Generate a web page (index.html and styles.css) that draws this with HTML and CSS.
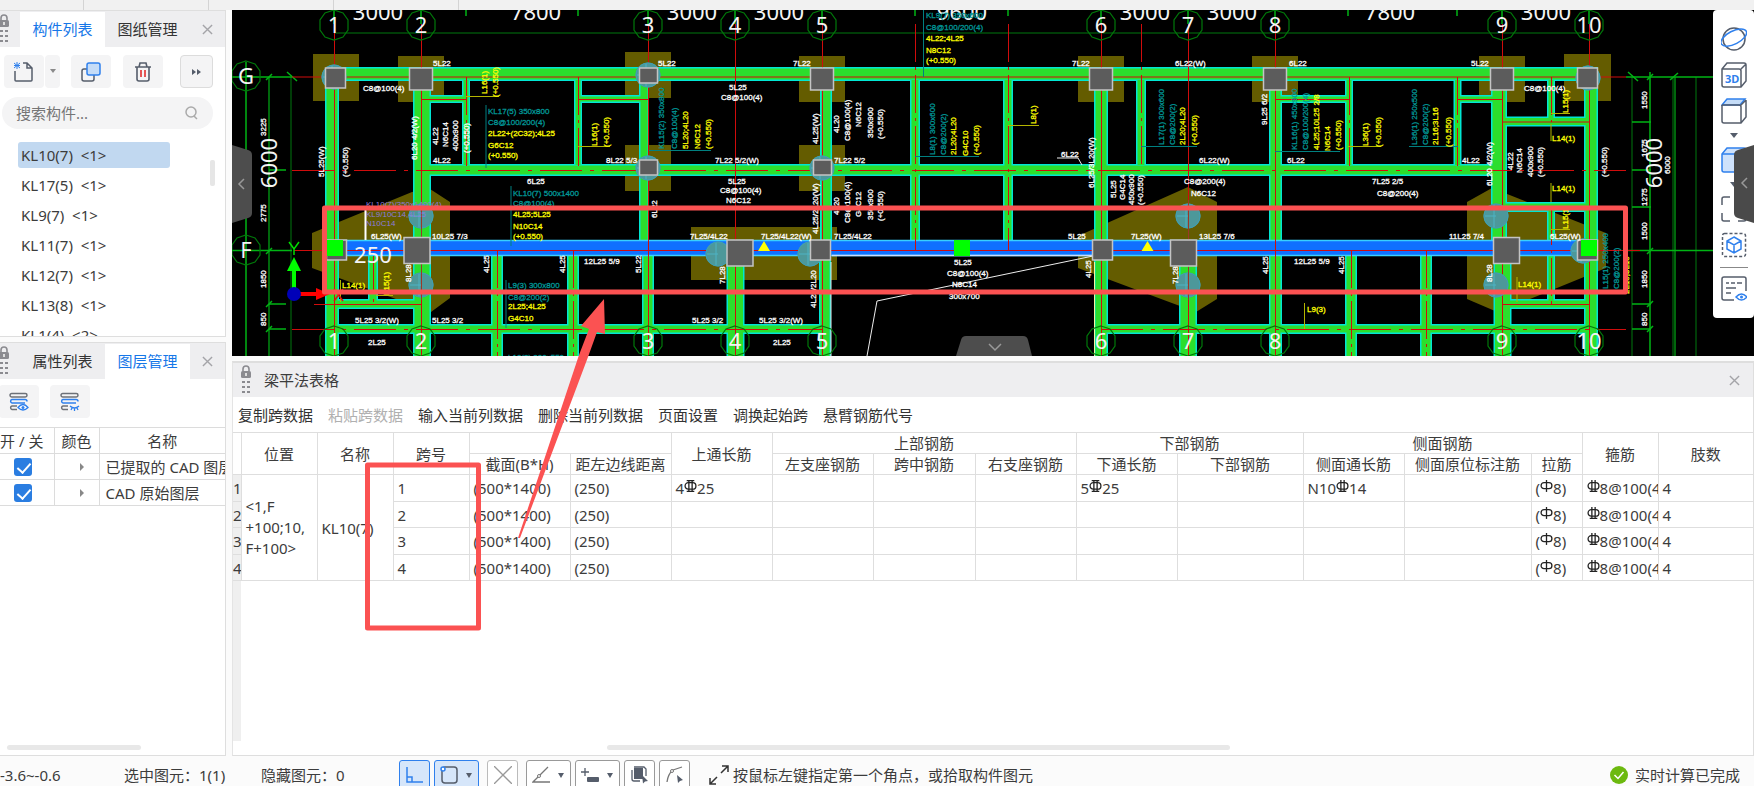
FILE: index.html
```html
<!DOCTYPE html>
<html lang="zh-CN">
<head>
<meta charset="utf-8">
<title>梁平法表格</title>
<link rel="stylesheet" href="styles.css">
</head>
<body>
<svg class="defs" aria-hidden="true">
  <symbol id="i-lock" viewBox="0 0 12 30"><path d="M3 6V4a3 3 0 0 1 6 0v2" fill="none" stroke="#8b8b90" stroke-width="1.6"/><rect x="1" y="6" width="10" height="7" rx="1.5" fill="#8b8b90"/><rect x="5" y="8" width="2" height="3" fill="#ddd"/><path d="M2 16h3v2H2zM7 16h3v2H7zM2 21h3v2H2zM7 21h3v2H7zM2 26h3v2H2zM7 26h3v2H7z" fill="#8b8b90"/></symbol>
  <symbol id="i-close" viewBox="0 0 12 12"><path d="M1 1l10 10M11 1L1 11" fill="none" stroke="#a4a4a8" stroke-width="1.5"/></symbol>
  <symbol id="i-layers" viewBox="0 0 20 20"><g fill="none" stroke-width="1.5"><rect x="1" y="1.500" width="17" height="3.500" rx="1.700" stroke="#6d7178"/><path d="M16 11H3a1.800 1.800 0 0 1 0-3.500h13a2 2 0 0 1 2 2" stroke="#2f80ed"/><path d="M8 17.500H3A1.800 1.800 0 0 1 3 14h5" stroke="#6d7178"/></g></symbol>
  <symbol id="r-3" viewBox="0 0 12 12"><g fill="none" stroke="#222" stroke-width="1.200"><rect x="1" y="2.500" width="10" height="6" rx="3"/><path d="M4.500 1v9M7.500 1v9M2.500 .600h7M2.500 10.500h7"/></g></symbol>
  <symbol id="r-2" viewBox="0 0 12 12"><g fill="none" stroke="#222" stroke-width="1.200"><rect x="1" y="2.500" width="10" height="6" rx="3"/><path d="M4.500 0v10M7.500 0v10M2.500 10.500h7"/></g></symbol>
  <symbol id="r-1" viewBox="0 0 12 12"><g fill="none" stroke="#222" stroke-width="1.200"><rect x="1" y="2.500" width="10" height="5.500" rx="2.700"/><path d="M6 0v11"/></g></symbol>
</svg>

<div class="ribbon-edge"><i></i><i></i><i></i><i></i></div>

<main class="workspace">
  <aside class="sidebar">
    <section class="panel components">
      <header class="tabs">
        <svg class="grip"><use href="#i-lock"/></svg>
        <button class="tab active">构件列表</button><button class="tab">图纸管理</button>
        <button class="close" aria-label="关闭"><svg><use href="#i-close"/></svg></button>
      </header>
      <div class="tools">
        <button class="tool" aria-label="新建"><svg viewBox="0 0 20 20"><path d="M1 9v9a1 1 0 0 0 1 1h15a1 1 0 0 0 1-1V6l-5-5h-4M13 1v5h5" fill="none" stroke="#555d6b" stroke-width="1.500"/><path d="M0 1l6 5M6 1L0 6M3 0v7M0 3.500h6" stroke="#2f80ed"/></svg></button>
        <button class="tool drop" aria-label="新建选项"><svg viewBox="0 0 8 5"><path d="M1 0h6L4 4z" fill="#8a8a8a"/></svg></button>
        <button class="tool second" aria-label="复制"><svg viewBox="0 0 20 20"><rect x="1" y="7" width="12" height="12" rx="2" fill="none" stroke="#555d6b" stroke-width="1.500"/><rect x="6" y="1" width="13" height="12" rx="2" fill="#c5dcf7" stroke="#2f80ed" stroke-width="1.500"/></svg></button>
        <button class="tool third" aria-label="删除"><svg viewBox="0 0 20 20"><path d="M2 5h16M6 5l1-4h6l1 4M4 5v12a2 2 0 0 0 2 2h8a2 2 0 0 0 2-2V5" fill="none" stroke="#555d6b" stroke-width="1.600"/><path d="M8 8v7M12 8v7" stroke="#e02020" stroke-width="1.500"/></svg></button>
        <button class="tool more" aria-label="更多"><svg viewBox="0 0 10 8"><path d="M0 1l4 3-4 3zM5 1l4 3-4 3z" fill="#555d6b"/></svg></button>
      </div>
      <label class="search"><input type="text" placeholder="搜索构件..." aria-label="搜索构件"><svg viewBox="0 0 14 14"><circle cx="6" cy="6" r="5" fill="none" stroke="#aaa" stroke-width="1.500"/><path d="M9 10l3 3" stroke="#aaa" stroke-width="1.500"/></svg></label>
      <div class="list-box">
        <ul class="list">
          <li class="selected">KL10(7) &nbsp;&lt;1&gt;</li><li>KL17(5) &nbsp;&lt;1&gt;</li><li>KL9(7) &nbsp;&lt;1&gt;</li><li>KL11(7) &nbsp;&lt;1&gt;</li><li>KL12(7) &nbsp;&lt;1&gt;</li><li>KL13(8) &nbsp;&lt;1&gt;</li><li>KL1(4) &nbsp;&lt;2&gt;</li>
        </ul>
        <span class="vthumb"></span>
      </div>
    </section>

    <section class="panel layers">
      <header class="tabs">
        <svg class="grip"><use href="#i-lock"/></svg>
        <button class="tab">属性列表</button><button class="tab active">图层管理</button>
        <button class="close" aria-label="关闭"><svg><use href="#i-close"/></svg></button>
      </header>
      <div class="layer-tools">
        <button class="tool" aria-label="显示图层"><svg viewBox="0 0 20 20"><use href="#i-layers" width="20" height="20"/><path d="M9 15.500q5-6 10 0q-5 5-10 0z" fill="#fff" stroke="#2f80ed" stroke-width="1.300"/><circle cx="14" cy="15.500" r="1.500" fill="#2f80ed"/></svg></button>
        <button class="tool" aria-label="隐藏图层"><svg viewBox="0 0 20 20"><use href="#i-layers" width="20" height="20"/><path d="M10 14q4.500 4 9 0M11 18l1-2M14.500 19v-3M18 18l-1-2" fill="none" stroke="#2f80ed" stroke-width="1.300"/></svg></button>
      </div>
      <table class="layer-table">
        <colgroup><col class="l1"><col class="l2"><col class="l3"></colgroup>
        <thead><tr><th class="switch">开 / 关</th><th>颜色</th><th class="lname">名称</th></tr></thead>
        <tbody>
          <tr><td><input type="checkbox" checked aria-label="已提取的 CAD 图层"></td><td><svg class="expand" viewBox="0 0 6 8"><path d="M1 0l4 4-4 4z" fill="#888"/></svg></td><td>已提取的 CAD 图层</td></tr>
          <tr><td><input type="checkbox" checked aria-label="CAD 原始图层"></td><td><svg class="expand" viewBox="0 0 6 8"><path d="M1 0l4 4-4 4z" fill="#888"/></svg></td><td>CAD 原始图层</td></tr>
        </tbody>
      </table>
      <span class="hthumb"></span>
    </section>
  </aside>

  <div class="content">
    <section class="canvas">
      <svg class="drawing" viewBox="232 10 1522 346" role="img" aria-label="梁平面图">
        <defs>
          <polygon id="ring" points="0,-15 9,-12 14,-5 14,5 9,12 0,15 -9,12 -14,5 -14,-5 -9,-12" fill="none" stroke="#00780a" stroke-width="1.200"/>
          <g id="pile"><circle r="12.500" fill="#4d989a"/><path d="M-11 0H0M-2-12V12" stroke="#4fb3c4"/><circle r="12" fill="none" stroke="#3fa0b4"/></g>
          <g id="frame">
            <path stroke-width="14" d="M334 74H1591M332 74V356M1591 67V356M1101 80V356"/>
            <path stroke-width="18" d="M422 74V356M735.500 256V356M1188 256V356M1502.500 256V356"/>
            <path stroke-width="16" d="M1499 80V256"/>
            <path stroke-width="10" d="M644 74V250M915 81V240M1008 81V240M1141 81V165M373 256V304M426 329H822M334 329H426M1101 329H1590M334 304H420M1505 304H1590M1505 121.500H1590M1505 207H1590"/>
            <path stroke-width="12" d="M648 256V356M826 80V250M825 256V356M422 170H1495M497 256V329M573 256V329M1351 256V329M1426 256V329M497 329V356M573 329V356M1351 329V356M1426 329V356"/>
            <path stroke-width="13" d="M1275.500 80V356"/>
            <path stroke-width="8" d="M466 81V165M578 81V165M1349 81V165M1457.500 81V165M1551 81V120M1551 207V304M425 99H466M578 99H645M1275 99H1349M1457 99H1495"/>
          </g>
        </defs>
        <rect x="232" y="10" width="1522" height="346" fill="#000"/>
        <g fill="#645c00">
          <path d="M313 54h46v47h-46zM398 56h46v46h-46zM625 52h46v46h-46zM625 145h46v46h-46zM799 56h46v46h-46zM799 145h46v46h-46zM691 227h146v53H691zM1078 56h46v46h-46zM1252 56h46v46h-46zM1479 56h46v46h-46zM1564 54h47v47h-47z"/>
          <path d="M312 233L412 192L430 189L450 202V298L431 312L312 268zM1078 236L1188 187L1217 202V299L1196 312L1078 268zM1467 202L1492 188L1606 233V268L1530 299L1502 314L1467 299z"/>
        </g>
        <!-- beams: edges first, then bodies -->
        <g stroke="#00e6d4" fill="none"><use href="#frame"/></g>
        <g stroke="#2cde2c" fill="none">
          <path stroke-width="11" d="M334 74H1590M332 74V356M1591 69V356M1101 80V356"/>
          <path stroke-width="15" d="M422 74V356M735.500 256V356M1188 256V356M1502.500 256V356"/>
          <path stroke-width="13" d="M1499 80V256"/>
          <path stroke-width="7" d="M644 74V250M915 80V240M1008 80V240M1141 80V165M373 256V304M334 329H822M1101 329H1590M334 304H420M1505 304H1590M1505 121.500H1590M1505 207H1590"/>
          <path stroke-width="9" d="M648 256V356M826 80V250M825 256V356M422 170H1495M497 256V356M573 256V356M1351 256V356M1426 256V356"/>
          <path stroke-width="10" d="M1275.500 80V356"/>
          <path stroke-width="5" d="M466 80V165M578 80V165M1349 80V165M1457.500 80V165M1551 80V120M1551 207V304M425 99H466M578 99H645M1275 99H1349M1457 99H1495"/>
        </g>
        <path d="M831 262V356" stroke="#eee"/><path d="M1094.500 262V356" stroke="#f4f4a0"/>
        <rect x="334" y="240" width="1255" height="16" fill="#1070ff"/>
        <path d="M334 240.500H1589M334 255.500H1589" stroke="#38d0ff" stroke-width="1.500"/><path d="M832 255.500H1092" stroke="#c8dcff" stroke-width="1.500"/>
        <!-- grid axes -->
        <g fill="none" stroke="#00500a" stroke-width="1.500">
          <path d="M334 33H1589M291 77V356M1632 77V356M1673 77V356M1696 77V356"/>
          <path stroke="#008a10" d="M269 77V356M1675 77V356"/>
          <path stroke="#00b414" d="M246 62V356M232 77H292M232 250.500H292M269 304H286M269 329H286M269 170H286M1632 122H1651M1632 170H1651M1632 207H1651M1632 304H1651M1632 329H1651M1650 72V356M1626 77H1713M1626 250.500H1713M466 10V16M578 10V16M915 10V16M1008 10V16M1348 10V16M1457 10V16M334 10V24M421 10V24M648 10V24M735 10V24M822 10V24M1101 10V24M1188 10V24M1275 10V24M1502 10V24M1589 10V24"/>
          <path stroke="#00b414" d="M287 72l10 9M266 80l6-6M1628 72l10 9M1647 80l6-6M1670 80l8-7M266 254l6-6M266 307l6-6M266 332l6-6M1647 254l6-6M1647 307l6-6M1647 332l6-6"/>
        </g>
        <g fill="none" stroke="#d00c0c" stroke-width="1">
          <path d="M292 77H1626M334 250.500H1640M294 250.500H334"/>
          <path d="M334.500 24V356M421.500 24V356M648.500 24V356M735.500 24V356M822.500 24V356M1101.500 24V356M1188.500 24V356M1275.500 24V356M1502.500 24V356M1589.500 24V356"/>
          <path d="M915.500 24V250M1008.500 24V250M1141.500 24V165" stroke-dasharray="38 5 3 5"/>
          <path d="M292 170.500H1626M292 329.500H822M1101 329.500H1626" stroke-dasharray="42 8 4 8"/>
          <path d="M466.500 77V170M578.500 77V170M497.500 250V356M573.500 250V356M1349.500 77V170M1457.500 77V170M1351.500 250V356M1426.500 250V356M1551.500 77V122M1551.500 207V304M373.500 256V304" stroke-dasharray="38 5 3 5"/>
          <path d="M314 304.500H421M1502 304.500H1589M421 99.500H466M578 99.500H648M1275 99.500H1349M1457 99.500H1502M1502 122H1589"/>
        </g>
        <!-- annotation leaders -->
        <path fill="none" stroke="#008080" d="M486 105V168M511 186V246M506 280V328M923.500 10V77M649 150.500H711M915 156.500H979M1141 146.500H1197M1275 151.500H1340M1409 146.500H1458"/>
        <path fill="none" stroke="#b4b400" d="M466 96.500H499M578 146.500H610M1008 125.500H1039M1348 146.500H1381M1304.500 303V329M1551 124V141M1551 183V202M1517 277V302M340.500 280V302M1551 113.500H1570M1551 229.500H1570M376 295.500H393"/>
        <path fill="none" stroke="#eee" d="M867 356L877 301L1093 256M1057 158H1078L1082 165"/><path d="M365.500 209V240" stroke="#fff" stroke-width="2"/>
        <!-- piles and columns -->
        <use href="#pile" x="334" y="77"/><use href="#pile" x="648" y="75"/><use href="#pile" x="648" y="168"/><use href="#pile" x="822" y="168"/><use href="#pile" x="421" y="216"/><use href="#pile" x="421" y="285"/><use href="#pile" x="718" y="254"/><use href="#pile" x="810" y="254"/><use href="#pile" x="1188" y="216"/><use href="#pile" x="1188" y="285"/><use href="#pile" x="1496" y="216"/><use href="#pile" x="1496" y="285"/><use href="#pile" x="1588" y="78"/><use href="#pile" x="1583" y="251"/>
        <path stroke="#9a3828" d="M421.500 200V300M1188.500 200V300"/>
        <path fill="#5c5c5c" stroke="#c4c4c4" stroke-width="1.500" d="M325.500 68h20v20h-20zM409.500 68h23v22h-23zM639.500 68h18v15h-18zM639.500 160h18v15h-18zM810.500 68h23v22h-23zM813.500 160h18v15h-18zM1089.500 68h23v22h-23zM1263.500 68h23v22h-23zM1490.500 68h23v22h-23zM1577.500 68h20v20h-20zM326.500 240h20v20h-20zM404 237.500h26v26h-26zM727 240h26v26h-26zM810.500 240h20v20h-20zM1092.500 240h20v20h-20zM1170.500 240h26v26h-26zM1493.500 237.500h26v26h-26zM1577.500 240h20v20h-20z"/>
        <path fill="#0f0" d="M327 240h16v16h-16zM954 240h16v16h-16zM1581 240h16v16h-16z"/>
        <path fill="#ff0" d="M764 241l6 10h-12zM1147.500 241l6 10h-12z"/>
        <!-- axis bubbles -->
        <use href="#ring" x="334" y="25"/><use href="#ring" x="421" y="25"/><use href="#ring" x="648" y="25"/><use href="#ring" x="735" y="25"/><use href="#ring" x="822" y="25"/><use href="#ring" x="1101" y="25"/><use href="#ring" x="1188" y="25"/><use href="#ring" x="1275" y="25"/><use href="#ring" x="1502" y="25"/><use href="#ring" x="1589" y="25"/>
        <use href="#ring" x="334" y="341"/><use href="#ring" x="421" y="341"/><use href="#ring" x="648" y="341"/><use href="#ring" x="735" y="341"/><use href="#ring" x="822" y="341"/><use href="#ring" x="1101" y="341"/><use href="#ring" x="1188" y="341"/><use href="#ring" x="1275" y="341"/><use href="#ring" x="1502" y="341"/><use href="#ring" x="1589" y="341"/>
        <use href="#ring" x="246" y="76"/><use href="#ring" x="246" y="250"/>
        <g class="axis">
          <text x="334" y="33">1</text><text x="421" y="33">2</text><text x="648" y="33">3</text><text x="735" y="33">4</text><text x="822" y="33">5</text><text x="1101" y="33">6</text><text x="1188" y="33">7</text><text x="1275" y="33">8</text><text x="1502" y="33">9</text><text x="1589" y="33">10</text>
          <text x="334" y="349">1</text><text x="421" y="349">2</text><text x="648" y="349">3</text><text x="735" y="349">4</text><text x="822" y="349">5</text><text x="1101" y="349">6</text><text x="1188" y="349">7</text><text x="1275" y="349">8</text><text x="1502" y="349">9</text><text x="1589" y="349">10</text>
          <text x="246" y="84">G</text><text x="246" y="258">F</text>
          <text x="378" y="20">3000</text><text x="536" y="20">7800</text><text x="692" y="20">3000</text><text x="779" y="20">3000</text><text x="962" y="20">9600</text><text x="1145" y="20">3000</text><text x="1232" y="20">3000</text><text x="1390" y="20">7800</text><text x="1546" y="20">3000</text>
          <text x="373" y="263">250</text>
          <g transform="rotate(-90)"><text x="-163" y="277">6000</text><text x="-163" y="1662">6000</text></g>
        </g>
        <!-- origin triad -->
        <path d="M294 290V268" stroke="#0f0" stroke-width="4"/><path d="M294 257l7 14h-14z" fill="#0f0"/><path d="M289 242l5 7 5-7M294 249v6" stroke="#0d0" stroke-width="1.500" fill="none"/>
        <path d="M300 294H318" stroke="#f00" stroke-width="4"/><path d="M330 294l-14-6v12z" fill="#f00"/><path d="M334 289l9 12M343 289l-9 12" stroke="#e01010" stroke-width="1.500"/><circle cx="294" cy="294" r="7" fill="#0000b8"/>
        <!-- reinforcement marks -->
        <g class="mark">
          <text x="433" y="66">5L22</text><text x="363" y="91">C8@100(4)</text><text x="433" y="163">4L22</text><text x="606" y="163">8L22 5/3</text><text x="527" y="184">6L25</text><text x="371" y="239">6L25(W)</text><text x="432" y="239">10L25 7/3</text><text x="584" y="264">12L25 5/9</text><text x="355" y="323">5L25 3/2(W)</text><text x="432" y="323">5L25 3/2</text><text x="368" y="345">2L25</text>
          <text x="658" y="66">5L22</text><text x="793" y="66">7L22</text><text x="729" y="90">5L25</text><text x="721" y="100">C8@100(4)</text><text x="715" y="163">7L22 5/2(W)</text><text x="834" y="163">7L22 5/2</text><text x="728" y="184">5L25</text><text x="720" y="193">C8@100(4)</text><text x="726" y="203">N6C12</text><text x="690" y="239">7L25/4L22</text><text x="761" y="239">7L25/4L22(W)</text><text x="834" y="239">7L25/4L22</text><text x="1068" y="239">5L25</text><text x="1061" y="157">6L22</text><text x="954" y="265">5L25</text><text x="947" y="276">C8@100(4)</text><text x="952" y="287">N8C14</text><text x="949" y="299">300x700</text><text x="692" y="323">5L25 3/2</text><text x="759" y="323">5L25 3/2(W)</text><text x="773" y="345">2L25</text><text x="1072" y="66">7L22</text>
          <text x="1175" y="66">6L22(W)</text><text x="1289" y="66">6L22</text><text x="1471" y="66">5L22</text><text x="1199" y="163">6L22(W)</text><text x="1287" y="163">6L22</text><text x="1462" y="163">4L22</text><text x="1184" y="184">C8@200(4)</text><text x="1191" y="196">N6C12</text><text x="1372" y="184">7L25 2/5</text><text x="1377" y="196">C8@200(4)</text><text x="1131" y="239">7L25(W)</text><text x="1199" y="239">13L25 7/6</text><text x="1449" y="239">11L25 7/4</text><text x="1294" y="264">12L25 5/9</text><text x="1524" y="91">C8@100(4)</text><text x="1550" y="239">6L25(W)</text>
        </g>
        <g class="mark yellow">
          <text x="488" y="136">2L22+(2C32);4L25</text><text x="488" y="148">G6C12</text><text x="488" y="158">(+0.550)</text><text x="513" y="217">4L25;5L25</text><text x="513" y="229">N10C14</text><text x="513" y="239">(+0.550)</text><text x="508" y="309">2L25;4L25</text><text x="508" y="321">G4C10</text><text x="342" y="288">L14(1)</text><text x="926" y="41">4L22;4L25</text><text x="926" y="53">N8C12</text><text x="926" y="63">(+0.550)</text><text x="1307" y="312">L9(3)</text><text x="1552" y="141">L14(1)</text><text x="1552" y="191">L14(1)</text><text x="1518" y="287">L14(1)</text>
        </g>
        <g class="mark teal">
          <text x="488" y="114">KL17(5) 350x800</text><text x="488" y="125">C8@100/200(4)</text><text x="513" y="196">KL10(7) 500x1400</text><text x="513" y="206">C8@100(4)</text><text x="508" y="288">L9(3) 300x800</text><text x="508" y="300">C8@200(2)</text><text x="508" y="360">L10(2) 300x550</text><text x="926" y="18">KL9(7) 350x600</text><text x="926" y="30">C8@100/200(4)</text>
        </g>
        <g class="mark violet"><text x="366" y="207">KL10(7)/350x1400(4)</text><text x="366" y="217">KL9/10C14,4L25</text><text x="366" y="226">N10C14</text></g>
        <g class="mark" transform="rotate(-90)">
          <text x="-136" y="266">3225</text><text x="-222" y="266">2775</text><text x="-288" y="266">1850</text><text x="-326" y="266">850</text>
          <text x="-177" y="324">5L25(W)</text><text x="-177" y="348">(+0.550)</text><text x="-160" y="417">6L20 4/2(W)</text><text x="-145" y="438">4L22</text><text x="-147" y="448">N6C14</text><text x="-151" y="458">400x900</text><text x="-153" y="469">(+0.550)</text><text x="-218" y="657">6L22</text><text x="-273" y="489">4L25</text><text x="-273" y="565">4L25</text><text x="-273" y="641">5L22</text><text x="-282" y="411">8L28</text>
          <text x="-144" y="818">4L25(W)</text><text x="-133" y="839">4L20</text><text x="-141" y="850">C8@100(4)</text><text x="-127" y="861">N6C12</text><text x="-138" y="873">350x900</text><text x="-139" y="883">(+0.550)</text><text x="-234" y="818">4L25/2L20(W)</text><text x="-215" y="839">4L20</text><text x="-223" y="850">C8@100(4)</text><text x="-217" y="861">G4C12</text><text x="-220" y="873">350x900</text><text x="-221" y="883">(+0.550)</text><text x="-284" y="725">7L28</text><text x="-308" y="816">4L25/2L20</text><text x="-188" y="1094">6L25/3L20(W)</text><text x="-278" y="1091">4L25</text>
          <text x="-198" y="1116">5L25</text><text x="-200" y="1125">G4C14</text><text x="-205" y="1134">450x900</text><text x="-205" y="1143">(+0.550)</text><text x="-125" y="1267">9L25 6/2</text><text x="-186" y="1492">6L20 4/2(W)</text><text x="-274" y="1268">4L25</text><text x="-274" y="1344">4L25</text><text x="-284" y="1178">7L28</text><text x="-282" y="1492">8L28</text>
          <text x="-170" y="1513">4L22</text><text x="-173" y="1522">N6C14</text><text x="-177" y="1533">400x900</text><text x="-177" y="1543">(+0.550)</text><text x="-177" y="1607">(+0.550)</text>
          <text x="-109" y="1647">1550</text><text x="-157" y="1647">1675</text><text x="-206" y="1647">1275</text><text x="-240" y="1647">1500</text><text x="-288" y="1647">1850</text><text x="-326" y="1647">850</text><text x="-174" y="1670">6000</text>
        </g>
        <g class="mark yellow" transform="rotate(-90)">
          <text x="-94" y="487">L16(1)</text><text x="-97" y="498">(+0.550)</text><text x="-146" y="597">L16(1)</text><text x="-147" y="609">(+0.550)</text><text x="-149" y="688">5L20;4L20</text><text x="-149" y="700">N6C12</text><text x="-149" y="711">(+0.550)</text><text x="-295" y="389">L15(1)</text><text x="-155" y="956">2L20;4L20</text><text x="-156" y="968">G4C10</text><text x="-155" y="979">(+0.550)</text><text x="-124" y="1036">L8(1)</text><text x="-145" y="1185">2L20;4L20</text><text x="-145" y="1197">(+0.550)</text><text x="-150" y="1319">4L25;10L25 2/8</text><text x="-151" y="1330">N6C14</text><text x="-150" y="1341">(+0.550)</text><text x="-146" y="1368">L36(1)</text><text x="-147" y="1381">(+0.550)</text><text x="-145" y="1438">2L16;3L16</text><text x="-147" y="1451">(+0.550)</text><text x="-113" y="1568">L15(1)</text><text x="-229" y="1568">L15(1)</text><text x="-294" y="1629">2L16;3L16</text>
        </g>
        <g class="mark teal" transform="rotate(-90)">
          <text x="-149" y="664">KL15(2) 350x800</text><text x="-149" y="677">C8@100(4)</text><text x="-155" y="935">L8(1) 300x600</text><text x="-155" y="946">C8@200(2)</text><text x="-145" y="1164">L17(1) 300x600</text><text x="-145" y="1175">C8@200(2)</text><text x="-150" y="1297">KL16(1) 450x900</text><text x="-150" y="1308">C8@100/200(4)</text><text x="-145" y="1417">L36(1) 250x500</text><text x="-145" y="1428">C8@200(2)</text><text x="-289" y="1608">L15(1) 250x400</text><text x="-289" y="1619">C8@200(2)</text>
        </g>
      </svg>
      <button class="fold left" aria-label="收起左侧"><svg viewBox="0 0 20 78"><path d="M0 0l16 5q4 1 4 5v58q0 4-4 5L0 78z" fill="#4d4d4d"/><path d="M12 34l-5 5 5 5" fill="none" stroke="#999" stroke-width="1.500"/></svg></button>
      <button class="fold bottom" aria-label="收起底部"><svg viewBox="0 0 76 20"><path d="M0 20L5 4q1-4 5-4h57q4 0 5 4l4 16z" fill="#4d4d4d"/><path d="M33 8l6 6 6-6" fill="none" stroke="#999" stroke-width="1.500"/></svg></button>
      <nav class="view-tools" aria-label="视图">
        <button aria-label="动态观察"><svg viewBox="0 0 26 26"><circle cx="13" cy="13" r="11" fill="none" stroke="#555d6b" stroke-width="1.500"/><ellipse cx="13" cy="11.500" rx="14" ry="6.500" transform="rotate(-27 13 12)" fill="none" stroke="#2f80ed" stroke-width="1.500"/></svg></button>
        <button aria-label="三维"><svg viewBox="0 0 26 26"><path d="M1 7l5-6h17a2 2 0 0 1 2 2v16l-5 6H3a2 2 0 0 1-2-2zM1 7h17a2 2 0 0 1 2 2v16M20 7l5-5" fill="none" stroke="#555d6b" stroke-width="1.500"/><text x="4" y="21" class="three-d">3D</text></svg></button>
        <button aria-label="俯视"><svg viewBox="0 0 26 26"><path d="M1 7l5-6h18l-5 6z" fill="#c5dcf7" stroke="#2f80ed" stroke-width="1.500"/><path d="M1 7v16a2 2 0 0 0 2 2h17l5-6V2M1 7h17a2 2 0 0 1 2 2v16M20 7l5-5" fill="none" stroke="#555d6b" stroke-width="1.500"/></svg></button>
        <svg class="caret" viewBox="0 0 8 5"><path d="M0 0h8L4 5z" fill="#555d6b"/></svg>
        <button aria-label="着色"><svg viewBox="0 0 26 26"><path d="M1 7l5-6h17a2 2 0 0 1 2 2v16l-5 6H3a2 2 0 0 1-2-2z" fill="#cfe2fb" stroke="#2f80ed" stroke-width="1.500"/><path d="M1 7h18v18" fill="none" stroke="#2f80ed" stroke-width="1.500"/></svg></button>
        <svg class="caret" viewBox="0 0 8 5"><path d="M0 0h8L4 5z" fill="#555d6b"/></svg>
        <button aria-label="全屏"><svg viewBox="0 0 26 26"><path d="M9 1H3a2 2 0 0 0-2 2v6M17 1h6a2 2 0 0 1 2 2v6M1 17v6a2 2 0 0 0 2 2h6M17 25h6a2 2 0 0 0 2-2v-6" fill="none" stroke="#555d6b" stroke-width="1.500"/></svg></button>
        <button aria-label="局部三维"><svg viewBox="0 0 26 26"><rect x="1.500" y="1.500" width="23" height="23" rx="2" fill="none" stroke="#555d6b" stroke-width="1.500" stroke-dasharray="3 2"/><path d="M13 5l7 4v8l-7 4-7-4V9zM6 9l7 4 7-4M13 13v8" fill="none" stroke="#2f80ed" stroke-width="1.500"/></svg></button>
        <hr>
        <button aria-label="显示设置"><svg viewBox="0 0 26 26"><path d="M13 24H3a2 2 0 0 1-2-2V3a2 2 0 0 1 2-2h20a2 2 0 0 1 2 2v12M5 7h3M10 7h4M16 7h5M5 12h10M5 17h5" fill="none" stroke="#555d6b" stroke-width="1.500"/><path d="M15 21q5.500-6 11 0q-5.500 6-11 0z" fill="#fff" stroke="#2f80ed" stroke-width="1.500"/><circle cx="20.500" cy="21" r="1.500" fill="#2f80ed"/></svg></button>
      </nav>
      <button class="fold right" aria-label="展开右侧"><svg viewBox="0 0 20 78"><path d="M20 0L4 5Q0 6 0 10v58q0 4 4 5l16 5z" fill="#4a4a4a"/><path d="M13 33l-5 5 5 5" fill="none" stroke="#999" stroke-width="1.500"/></svg></button>
    </section>

    <section class="panel beam">
      <header class="beam-title"><svg class="grip"><use href="#i-lock"/></svg><h2>梁平法表格</h2><button class="close" aria-label="关闭"><svg><use href="#i-close"/></svg></button></header>
      <div class="beam-actions"><button>复制跨数据</button><button disabled>粘贴跨数据</button><button>输入当前列数据</button><button>删除当前列数据</button><button>页面设置</button><button>调换起始跨</button><button>悬臂钢筋代号</button></div>
      <div class="sheet">
        <table class="beam-table">
          <colgroup><col class="c8"><col class="c76"><col class="c76"><col class="c76"><col class="c101"><col class="c101"><col class="c101"><col class="c101"><col class="c102"><col class="c101"><col class="c101"><col class="c126"><col class="c101"><col class="c127"><col class="c51"><col class="c76"><col></colgroup>
          <thead>
            <tr><th rowspan="2"></th><th rowspan="2">位置</th><th rowspan="2">名称</th><th rowspan="2">跨号</th><th colspan="2"></th><th rowspan="2">上通长筋</th><th colspan="3">上部钢筋</th><th colspan="2">下部钢筋</th><th colspan="3">侧面钢筋</th><th rowspan="2">箍筋</th><th rowspan="2">肢数</th></tr>
            <tr><th>截面(B*H)</th><th>距左边线距离</th><th>左支座钢筋</th><th>跨中钢筋</th><th>右支座钢筋</th><th>下通长筋</th><th>下部钢筋</th><th>侧面通长筋</th><th>侧面原位标注筋</th><th>拉筋</th></tr>
          </thead>
          <tbody>
            <tr><th class="num">1</th><td rowspan="4" class="place">&lt;1,F<br>+100;10,<br>F+100&gt;</td><td rowspan="4">KL10(7)</td><td>1</td><td>(500*1400)</td><td>(250)</td><td>4<svg class="bar"><use href="#r-3"/></svg>25</td><td></td><td></td><td></td><td>5<svg class="bar"><use href="#r-3"/></svg>25</td><td></td><td>N10<svg class="bar"><use href="#r-2"/></svg>14</td><td></td><td>(<svg class="bar"><use href="#r-1"/></svg>8)</td><td><svg class="bar"><use href="#r-2"/></svg>8@100(4)</td><td>4</td></tr>
            <tr><th class="num">2</th><td>2</td><td>(500*1400)</td><td>(250)</td><td></td><td></td><td></td><td></td><td></td><td></td><td></td><td></td><td>(<svg class="bar"><use href="#r-1"/></svg>8)</td><td><svg class="bar"><use href="#r-2"/></svg>8@100(4)</td><td>4</td></tr>
            <tr><th class="num">3</th><td>3</td><td>(500*1400)</td><td>(250)</td><td></td><td></td><td></td><td></td><td></td><td></td><td></td><td></td><td>(<svg class="bar"><use href="#r-1"/></svg>8)</td><td><svg class="bar"><use href="#r-2"/></svg>8@100(4)</td><td>4</td></tr>
            <tr><th class="num">4</th><td>4</td><td>(500*1400)</td><td>(250)</td><td></td><td></td><td></td><td></td><td></td><td></td><td></td><td></td><td>(<svg class="bar"><use href="#r-1"/></svg>8)</td><td><svg class="bar"><use href="#r-2"/></svg>8@100(4)</td><td>4</td></tr>
          </tbody>
        </table>
      </div>
      <span class="hthumb wide"></span>
    </section>
  </div>
</main>

<footer class="status">
  <span class="coord">-3.6~-0.6</span><span class="picked">选中图元：1(1)</span><span class="hidden-count">隐藏图元：0</span>
  <div class="modes">
    <button class="on" aria-label="正交"><svg viewBox="0 0 18 18"><path d="M1 1v15h16M1 11h5v5" fill="none" stroke="#2f80ed" stroke-width="1.500"/></svg></button>
    <button class="on pair" aria-label="对象捕捉"><svg viewBox="0 0 18 18"><rect x="2" y="1" width="15" height="16" rx="3" fill="none" stroke="#555d6b" stroke-width="1.500"/><circle cx="3" cy="3" r="2" fill="#fff" stroke="#2f80ed" stroke-width="1.500"/></svg><svg class="caret" viewBox="0 0 8 5"><path d="M1 0h6L4 5z" fill="#555d6b"/></svg></button>
    <button class="apart dim" aria-label="交点"><svg viewBox="0 0 18 18"><path d="M0 0l18 18M18 0L0 18" stroke="#999" stroke-width="1.300"/></svg></button>
    <button class="apart pair" aria-label="角度"><svg viewBox="0 0 18 18"><path d="M16 1L1 16h17" fill="none" stroke="#777" stroke-width="1.300"/><circle cx="7" cy="10" r="1.500" fill="#fff" stroke="#777"/></svg><svg class="caret" viewBox="0 0 8 5"><path d="M1 0h6L4 5z" fill="#555d6b"/></svg></button>
    <button class="pair" aria-label="偏移"><svg viewBox="0 0 18 18"><path d="M0 6h8M4 2v8" stroke="#555d6b" stroke-width="1.300"/><rect x="6" y="11" width="12" height="5" rx="1" fill="#555d6b"/></svg><svg class="caret" viewBox="0 0 8 5"><path d="M1 0h6L4 5z" fill="#555d6b"/></svg></button>
    <button aria-label="选择"><svg viewBox="0 0 18 18"><rect x="3" y="2" width="9" height="11" fill="#555d6b"/><path d="M1 4v9a2 2 0 0 0 2 2h6M3 1h10l2 2v7" fill="none" stroke="#555d6b" stroke-width="1.300"/><path d="M11 9l6 6-3 .500-2 2z" fill="#555d6b"/></svg></button>
    <button aria-label="折线"><svg viewBox="0 0 18 18"><path d="M1 16Q2 8 7 4l9-3" fill="none" stroke="#777" stroke-width="1.300"/><path d="M11 9l6 5-3 1-2 2z" fill="#555d6b"/><circle cx="6" cy="5" r="1.500" fill="#fff" stroke="#777"/></svg></button>
  </div>
  <span class="hint"><svg viewBox="0 0 20 20"><path d="M12 8l7-7M13 1h6v6M8 12l-7 7M1 13v6h6" fill="none" stroke="#333" stroke-width="1.500"/></svg>按鼠标左键指定第一个角点，或拾取构件图元</span>
  <span class="done"><svg viewBox="0 0 18 18"><circle cx="9" cy="9" r="9" fill="#6cb90f"/><path d="M4.500 9l3.500 3.500 5.500-6.500" fill="none" stroke="#fff" stroke-width="1.500"/></svg>实时计算已完成</span>
</footer>

<svg class="callouts" viewBox="0 0 1754 786" preserveAspectRatio="xMinYMin meet" aria-hidden="true">
  <g fill="none" stroke="#fb5252" stroke-width="5" stroke-linejoin="round"><rect x="324.500" y="208" width="1301" height="84"/><rect x="367.500" y="465" width="111" height="163"/></g>
  <path d="M604 299L605 334L597 332L588 357L520 538H518L579 355L589 329L581 326z" fill="#fb5252"/>
</svg>
</body>
</html>
```
FILE: styles.css
```css
* { box-sizing: border-box; }
body {
  margin: 0; position: relative; min-height: 100vh; display: flex; flex-direction: column; overflow: hidden;
  background: #fbfbfb; color: #3c3c3c;
  font: 15px/20px "Noto Sans", "Noto Sans CJK SC", sans-serif;
}
button, input { font: inherit; color: inherit; margin: 0; }
button { padding: 0; border: 0; background: none; }
svg { display: block; flex: none; }
.defs { position: absolute; width: 0; height: 0; }

.ribbon-edge { display: flex; height: 10px; background: #f1f1f1; }
.ribbon-edge i { width: 125px; border-right: 1px solid #d4d4d4; }
.ribbon-edge i:first-child { width: 84px; }

.workspace { flex: 1; display: grid; grid-template-columns: 226px minmax(0, 1fr); column-gap: 6px; }
.sidebar { display: flex; flex-direction: column; gap: 5px; min-width: 0; }
.panel { background: #fff; border: 1px solid #dedede; border-left: 0; position: relative; }
.layers { flex: 1; }

.tabs { display: flex; align-items: stretch; height: 36px; padding-top: 1px; background: #eeeef0; }
.tabs .grip { margin: 2px 10px 0 -2px; }
.grip { width: 12px; height: 30px; }
.tab { width: 85px; padding-bottom: 2px; color: #333; }
.tab.active { background: #fff; color: #1677e8; }
.close { flex: 1; display: flex; align-items: center; justify-content: center; }
.close svg { width: 11px; height: 11px; }

.tools { display: flex; padding: 8px 0 0 4px; }
.tool { width: 40px; height: 33px; border-radius: 4px; background: #f4f4f5; display: flex; align-items: center; justify-content: center; }
.tool svg { width: 20px; height: 20px; }
.tool.drop { width: 15px; margin-left: 1px; }
.tool.drop svg { width: 8px; height: 5px; }
.tool.second { margin-left: 11px; }
.tool.third { margin-left: 12px; }
.tool.more { width: 33px; margin-left: 17px; border: 1px solid #dcdcdc; }
.tool.more svg { width: 10px; height: 8px; }
.search { display: flex; align-items: center; height: 32px; margin: 9px 12px 0 2px; padding: 0 14px 0 14px; border-radius: 16px; background: #f4f4f5; }
.search input { flex: 1; min-width: 0; border: 0; background: none; outline: 0; padding: 0; }
.search input::placeholder { color: #757575; opacity: 1; }
.search svg { width: 14px; height: 14px; }
.list-box { height: 207px; padding-top: 13px; overflow: hidden; position: relative; }
.list { list-style: none; margin: 0; padding: 0 55px 0 18px; }
.list li { height: 26px; margin-bottom: 4px; padding: 3px; border-radius: 3px; }
.list .selected { background: #c1d8f0; }
.vthumb { position: absolute; right: 10px; top: 31px; width: 5px; height: 26px; border-radius: 2px; background: #e6e6e6; }

.layer-tools { display: flex; gap: 11px; padding: 6px 0 9px 0; margin-left: -1px; }
.layer-table { border-collapse: collapse; table-layout: fixed; width: 100%; }
.l1 { width: 54px; } .l2 { width: 45px; }
.layer-table th, .layer-table td { height: 26px; padding: 0; border: 1px solid #dcdcdc; border-left: 0; font-weight: 400; white-space: nowrap; overflow: hidden; }
.layer-table th:last-child, .layer-table td:last-child { border-right: 0; }
.layer-table td:last-child { padding-left: 6px; }
.layer-table .switch { text-align: left; }
.layer-table .lname { text-align: center; }
.layer-table input { appearance: none; display: block; width: 18px; height: 18px; margin: 0 auto 0 14px; border-radius: 3px; background: #2a7de1; position: relative; }
.layer-table input:checked::after { content: ""; position: absolute; left: 6px; top: 2px; width: 6px; height: 11px; border: solid #fff; border-width: 0 2px 2px 0; transform: rotate(42deg); }
.expand { width: 6px; height: 8px; margin-left: 24px; }
.hthumb { position: absolute; left: 7px; bottom: 5px; width: 134px; height: 5px; border-radius: 3px; background: #e8e8e8; }
.hthumb.wide { left: 25%; width: 41%; margin-left: -6px; }

.content { display: flex; flex-direction: column; gap: 5px; min-width: 0; }
.canvas { position: relative; background: #000; }
.drawing { width: 100%; height: auto; }
.axis { font: 22px "Noto Sans", sans-serif; fill: #f4f4f4; text-anchor: middle; }
.mark { font: 8px "Liberation Sans Narrow", "Liberation Sans", sans-serif; fill: #fff; stroke: #fff; stroke-width: 0.3; }
.mark.yellow { fill: #ff0; stroke: #ff0; }
.mark.teal { fill: #009898; stroke: #009898; }
.mark.violet { fill: #8c7cdc; stroke: none; }
.fold { position: absolute; }
.fold.left { left: 0; top: 39%; }
.fold.right { right: 0; top: 39%; }
.fold.left svg, .fold.right svg { width: 20px; height: 78px; }
.fold.bottom { left: 50%; bottom: 0; margin-left: -37px; }
.fold.bottom svg { width: 76px; height: 20px; }
.view-tools { position: absolute; top: 0; right: 0; width: 41px; padding: 16px 0 16px; display: flex; flex-direction: column; align-items: center; gap: 10px; background: #fff; border-radius: 4px; }
.view-tools button svg { width: 26px; height: 26px; }
.view-tools .caret { width: 8px; height: 5px; margin: -1px 0; }
.view-tools hr { width: 28px; margin: -1px 0 -2px; border: 0; border-top: 1px solid #888; }
.three-d { font: bold 11px "Noto Sans", sans-serif; fill: #2f80ed; }

.beam { flex: 1; border-left: 1px solid #e4e4e4; border-top-width: 2px; }
.beam-title { display: flex; align-items: center; height: 34px; padding-left: 7px; background: #eeeef0; }
.beam-title h2 { margin: 0 auto 0 12px; font: inherit; }
.beam-title .close { flex: none; width: 38px; }
.beam-actions { display: flex; gap: 15px; height: 35px; padding-left: 5px; align-items: center; }
.beam-actions button { color: #333; }
.beam-actions button:disabled { color: #b0b0b0; }
.sheet { position: absolute; top: 69px; bottom: 14px; left: 0; right: 0; background: linear-gradient(90deg, #efefef 8px, #fff 8px); }
.beam-table { border-collapse: collapse; table-layout: fixed; width: 100%; background: #fff; }
.beam-table th, .beam-table td { border: 1px solid #dedede; padding: 0 0 0 4px; font-weight: 400; white-space: nowrap; overflow: hidden; text-align: left; height: 26px; }
.beam-table thead th { height: 21px; padding: 0; text-align: center; line-height: 20px; }
.beam-table tbody tr:nth-child(odd) td { height: 27px; }
.beam-table .num { padding: 0; background: #efefef; }
.beam-table .place { line-height: 21px; }
.beam-table tr > :first-child { border-left: 0; }
.beam-table tr > :last-child { border-right: 0; }
.bar { display: inline-block; width: 13px; height: 13px; vertical-align: 1px; }
.c8 { width: 8px; } .c51 { width: 51px; } .c76 { width: 76px; } .c101 { width: 101px; } .c102 { width: 102px; } .c126 { width: 126px; } .c127 { width: 127px; }

.status { display: flex; align-items: center; height: 30px; padding: 8px 14px 0 0; white-space: nowrap; overflow: hidden; }
.coord { width: 124px; }
.picked { width: 137px; }
.hidden-count { width: 138px; }
.modes { display: flex; gap: 4px; align-self: flex-start; margin-top: -4px; }
.modes button { width: 31px; height: 30px; border: 1px solid #999; border-radius: 3px; background: #fff; display: flex; align-items: center; justify-content: center; }
.modes button.pair { width: 45px; gap: 7px; }
.modes button.on { background: #d6e6fa; border-color: #2f80ed; }
.modes button.dim { border-color: #bbb; }
.modes button.apart { margin-left: 4px; }
.modes svg { width: 18px; height: 18px; }
.modes .caret { width: 8px; height: 5px; }
.hint { display: flex; align-items: center; gap: 4px; margin-left: 19px; }
.hint svg { width: 20px; height: 20px; }
.done { display: flex; align-items: center; gap: 7px; margin-left: auto; }
.done svg { width: 18px; height: 18px; }
.callouts { position: absolute; left: 0; top: 0; width: 100%; height: auto; pointer-events: none; }
```
